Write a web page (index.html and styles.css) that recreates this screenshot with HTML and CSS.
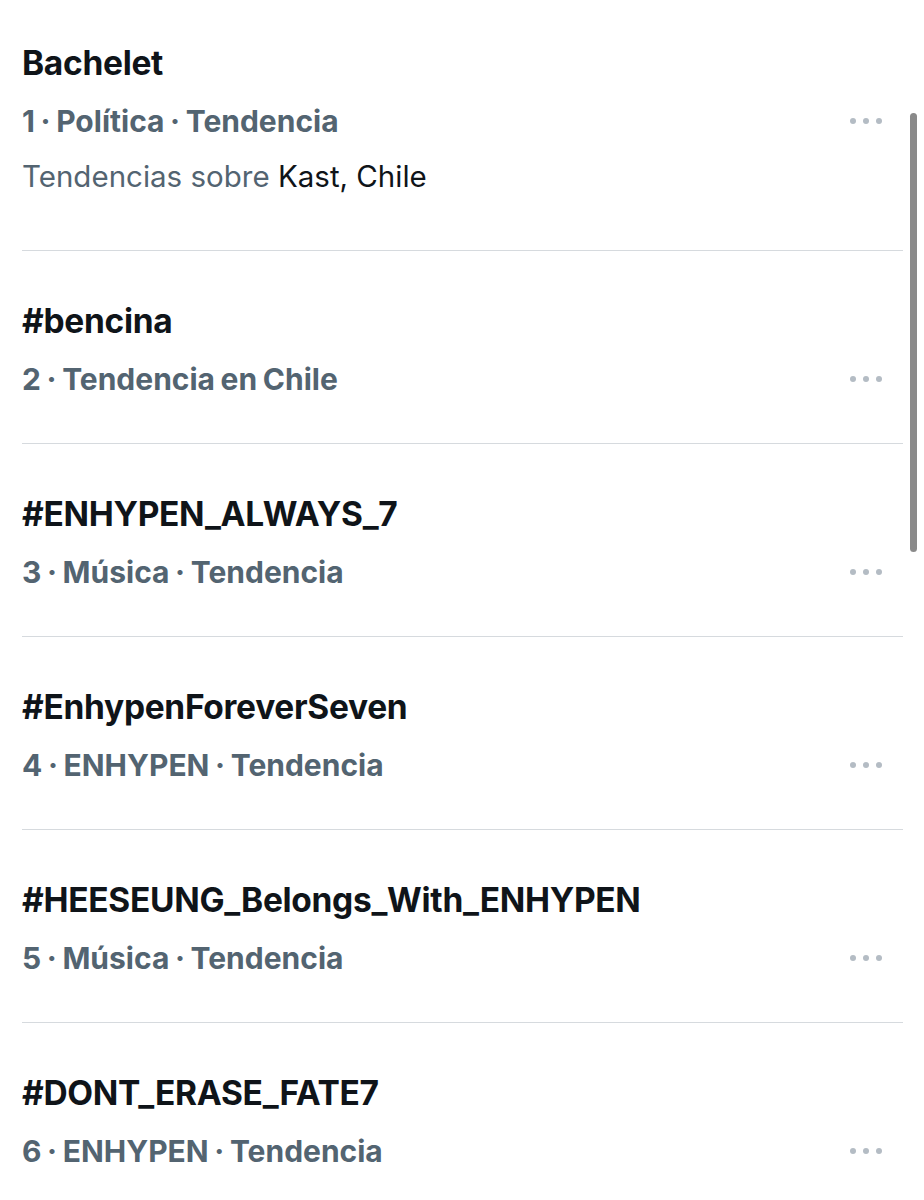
FILE: index.html
```html
<!DOCTYPE html>
<html lang="es">
<head>
<meta charset="utf-8">
<title>Tendencias</title>
<link rel="stylesheet" href="styles.css">
</head>
<body>
<main class="trends">
  <article class="trend trend-first">
    <div class="title">Bachelet</div>
    <div class="meta"><span>1 · Política · Tendencia</span><span class="more"><i></i><i></i><i></i></span></div>
    <div class="desc">Tendencias sobre <span class="strong">Kast, Chile</span></div>
  </article>
  <article class="trend">
    <div class="title">#bencina</div>
    <div class="meta"><span>2 · Tendencia en Chile</span><span class="more"><i></i><i></i><i></i></span></div>
  </article>
  <article class="trend">
    <div class="title">#ENHYPEN_ALWAYS_7</div>
    <div class="meta"><span>3 · Música · Tendencia</span><span class="more"><i></i><i></i><i></i></span></div>
  </article>
  <article class="trend">
    <div class="title">#EnhypenForeverSeven</div>
    <div class="meta"><span>4 · ENHYPEN · Tendencia</span><span class="more"><i></i><i></i><i></i></span></div>
  </article>
  <article class="trend">
    <div class="title">#HEESEUNG_Belongs_With_ENHYPEN</div>
    <div class="meta"><span>5 · Música · Tendencia</span><span class="more"><i></i><i></i><i></i></span></div>
  </article>
  <article class="trend">
    <div class="title">#DONT_ERASE_FATE7</div>
    <div class="meta"><span>6 · ENHYPEN · Tendencia</span><span class="more"><i></i><i></i><i></i></span></div>
  </article>
</main>
<div class="scrollbar"></div>
</body>
</html>
```
FILE: styles.css
```css
html, body {
  margin: 0;
  padding: 0;
  background: #ffffff;
  height: 1200px;
  overflow: hidden;
}
body {
  font-family: Inter, "Noto Sans", "Liberation Sans", sans-serif;
  color: #0f1419;
  position: relative;
}
.trends {
  margin: 0 21px 0 22px;
}
.trend {
  padding: 50px 21px 44px 0;
  border-bottom: 1px solid #d6dade;
}
.trend-first {
  padding-top: 43px;
  padding-bottom: 54px;
}
.title {
  font-size: 33.5px;
  line-height: 40px;
  font-weight: 700;
  letter-spacing: -0.3px;
  white-space: nowrap;
}
.meta {
  margin-top: 18px;
  display: flex;
  justify-content: space-between;
  align-items: center;
  font-size: 30px;
  line-height: 40px;
  font-weight: 700;
  color: #536471;
  word-spacing: -1.5px;
}
.desc {
  margin-top: 15px;
  font-size: 29.5px;
  line-height: 40px;
  color: #536471;
}
.desc .strong {
  color: #0f1419;
}
.more {
  display: flex;
  gap: 7px;
  margin-top: 0;
}
.more i {
  display: block;
  width: 6px;
  height: 6px;
  border-radius: 50%;
  background: #b4bcc4;
}
.scrollbar {
  position: absolute;
  left: 910px;
  top: 113px;
  width: 7px;
  height: 439px;
  border-radius: 4px;
  background: #8a8a8a;
}
```
